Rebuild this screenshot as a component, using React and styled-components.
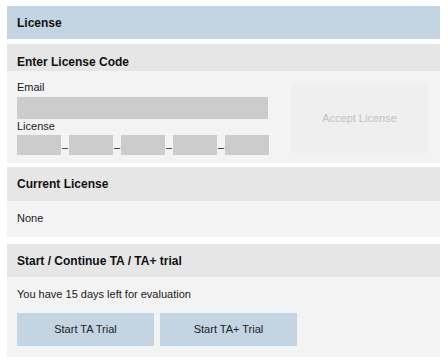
import React from "react";
import styled, { createGlobalStyle } from "styled-components";

const Global = createGlobalStyle`
  html, body { margin: 0; padding: 0; background: #ffffff; }
  body { font-family: "Liberation Sans", Arial, sans-serif; color: #1a1a1a; }
`;

const Page = styled.div`
  display: flex;
  flex-direction: column;
  padding: 6px 8px 6px 7px;
  width: 433px;
`;

const TopBar = styled.div`
  background: #c3d4e3;
  padding: 10px 10px 9px;
  font-size: 12px;
  line-height: 14px;
  font-weight: bold;
  color: #111;
`;

const Panel = styled.section`
  display: flex;
  flex-direction: column;
  margin-top: ${(p) => p.$gap}px;
  background: #f3f3f3;
`;

const PanelHead = styled.div`
  background: #e6e6e6;
  padding: ${(p) => p.$pt}px 10px ${(p) => p.$pb}px;
  font-size: 12px;
  line-height: 14px;
  font-weight: bold;
  color: #111;
`;

const PanelBody = styled.div`
  padding: ${(p) => p.$pad};
  font-size: 11px;
  line-height: 13px;
`;

const CodeGrid = styled.div`
  display: grid;
  grid-template-columns: 252px 137px;
  column-gap: 22px;
  align-items: center;
`;

const Fields = styled.div`
  display: flex;
  flex-direction: column;
`;

const Label = styled.div`
  font-size: 11px;
  line-height: 13px;
  margin-top: ${(p) => p.$mt || 0}px;
`;

const EmailBox = styled.div`
  height: 22px;
  width: 251px;
  background: #cccccc;
  margin-top: 3px;
`;

const CodeRow = styled.div`
  display: flex;
  margin-top: 2px;
  height: 20px;
`;

const CodeBox = styled.div`
  width: 44px;
  height: 20px;
  background: #cccccc;
`;

const Dash = styled.span`
  width: 8px;
  display: flex;
  align-items: flex-end;
  justify-content: center;
  font-size: 11px;
  line-height: 13px;
  color: #222;
  padding-bottom: 1px;
`;

const AcceptButton = styled.div`
  height: 70px;
  background: #efefef;
  color: #c2c2c2;
  display: flex;
  align-items: center;
  justify-content: center;
  font-size: 11px;
`;

const Buttons = styled.div`
  display: flex;
  gap: 6px;
  margin-top: 12px;
`;

const TrialButton = styled.div`
  width: 137px;
  height: 33px;
  background: #c3d4e3;
  display: flex;
  align-items: center;
  justify-content: center;
  font-size: 11px;
  color: #222;
`;

export default function App() {
  const parts = [0, 1, 2, 3, 4];
  return (
    <>
      <Global />
      <Page>
        <TopBar>License</TopBar>

        <Panel $gap={5}>
          <PanelHead $pt={11} $pb={2}>Enter License Code</PanelHead>
          <PanelBody $pad="10px 12px 8px 10px">
            <CodeGrid>
              <Fields>
                <Label>Email</Label>
                <EmailBox />
                <Label $mt={1}>License</Label>
                <CodeRow>
                  {parts.map((i) => (
                    <React.Fragment key={i}>
                      {i > 0 && <Dash>–</Dash>}
                      <CodeBox />
                    </React.Fragment>
                  ))}
                </CodeRow>
              </Fields>
              <AcceptButton>Accept License</AcceptButton>
            </CodeGrid>
          </PanelBody>
        </Panel>

        <Panel $gap={4}>
          <PanelHead $pt={10} $pb={10}>Current License</PanelHead>
          <PanelBody $pad="11px 10px 12px">None</PanelBody>
        </Panel>

        <Panel $gap={7}>
          <PanelHead $pt={10} $pb={9}>Start / Continue TA / TA+ trial</PanelHead>
          <PanelBody $pad="11px 10px 11px">
            <div>You have 15 days left for evaluation</div>
            <Buttons>
              <TrialButton>Start TA Trial</TrialButton>
              <TrialButton>Start TA+ Trial</TrialButton>
            </Buttons>
          </PanelBody>
        </Panel>
      </Page>
    </>
  );
}
